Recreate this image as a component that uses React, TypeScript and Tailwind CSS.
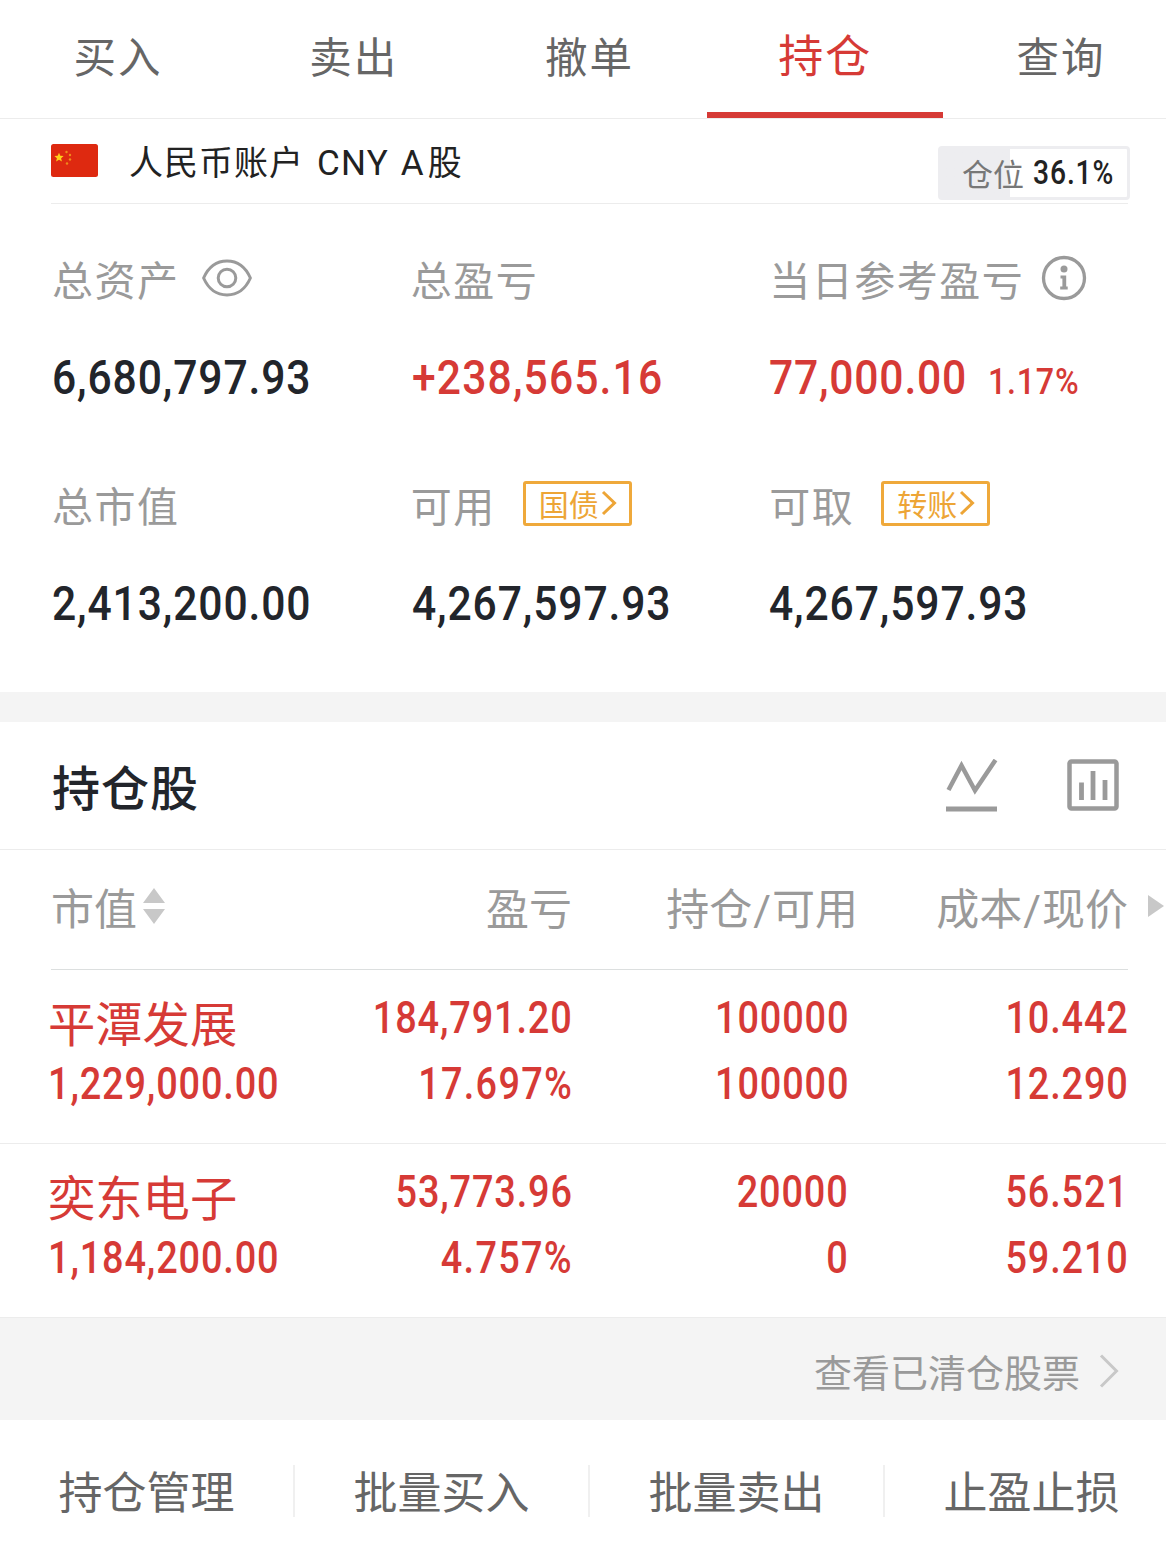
import type { ReactNode } from 'react';
import { clsx } from 'clsx';

const tabs = ['买入', '卖出', '撤单', '持仓', '查询'];

const holdings = [
  {
    name: '平潭发展',
    value: '1,229,000.00',
    profit: '184,791.20',
    rate: '17.697%',
    amount: '100000',
    usable: '100000',
    cost: '10.442',
    price: '12.290',
  },
  {
    name: '奕东电子',
    value: '1,184,200.00',
    profit: '53,773.96',
    rate: '4.757%',
    amount: '20000',
    usable: '0',
    cost: '56.521',
    price: '59.210',
  },
];

const actions = ['持仓管理', '批量买入', '批量卖出', '止盈止损'];

// Narrow digits, squeezed towards one side
function Num({ children, right, className }: { children: ReactNode; right?: boolean; className?: string }) {
  return (
    <span
      className={clsx(
        "inline-block whitespace-nowrap font-['Roboto',sans-serif] font-medium scale-x-[0.87]",
        right ? 'origin-right' : 'origin-left',
        className ?? 'tracking-[1px]'
      )}
    >
      {children}
    </span>
  );
}

function Slash() {
  return <span className="px-px font-['Roboto',sans-serif] leading-[0]">/</span>;
}

function Flag() {
  return (
    <svg className="mb-[2px] w-[47px] h-[33px]" viewBox="0 0 47 33">
      <rect width="47" height="33" rx="2.5" fill="#de2910" />
      <path d="M8 8.8l1.3 3 3.3.3-2.5 2.1.8 3.2L8 15.7l-2.900 1.700.8-3.200-2.500-2.100 3.300-.3z" fill="#ffcf1a" />
      <g fill="#f08a1c">
        <circle cx="15.5" cy="8" r="1.2" />
        <circle cx="19" cy="11" r="1.2" />
        <circle cx="19" cy="15.5" r="1.2" />
        <circle cx="16" cy="19.5" r="1.2" />
      </g>
    </svg>
  );
}

function EyeIcon() {
  return (
    <svg className="w-[50px] h-[38px]" viewBox="0 0 50 38" fill="none" stroke="#9a9a9a" strokeWidth="3">
      <path d="M1.6 19C6.5 8 15 2 25 2s18.500 6 23.400 17C43.500 30 35 36 25 36S6.500 30 1.600 19z" strokeLinejoin="round" />
      <circle cx="25" cy="19" r="8.800" />
    </svg>
  );
}

function InfoIcon() {
  return (
    <svg className="w-[46px] h-[46px]" viewBox="0 0 46 46" fill="none">
      <circle cx="23" cy="23" r="20.500" stroke="#9a9a9a" strokeWidth="3.300" />
      <circle cx="23" cy="14" r="3.500" fill="#9a9a9a" />
      <path d="M19.500 20.500h5.700v11h1.500v3h-7.500v-3h2.200v-8h-1.900z" fill="#9a9a9a" />
    </svg>
  );
}

function LineIcon() {
  return (
    <svg className="w-[54px] h-[54px]" viewBox="0 0 54 54" fill="none" stroke="#9a9a9a">
      <path d="M3.500 31L16.500 6.500l13.500 25L50.500 1" strokeWidth="4.500" />
      <path d="M1 50h51" strokeWidth="5" />
    </svg>
  );
}

function BarsIcon() {
  return (
    <svg className="w-[52px] h-[52px]" viewBox="0 0 52 52" fill="none" stroke="#9a9a9a">
      <rect x="2.500" y="2.500" width="47" height="47" rx="2" strokeWidth="4.500" />
      <path d="M14.500 23.500v17.500M26 12v29M38 21v20" strokeWidth="4.800" />
    </svg>
  );
}

function TagButton({ children }: { children: ReactNode }) {
  return (
    <button className="mb-[2px] ml-[27px] flex h-[45px] w-[109px] items-center rounded-[3px] border-[3px] border-[#efa93b] pl-[11px] text-[30px] leading-[40px] text-[#eda536]">
      <span className="w-[64px] whitespace-nowrap pb-px">{children}</span>
      <svg className="h-[26px] w-[16px]" viewBox="0 0 16 26" fill="none" stroke="#eda536" strokeWidth="3">
        <path d="M2 2l11.500 11L2 24" />
      </svg>
    </button>
  );
}

function Stat({ label, extra, children }: { label: string; extra?: ReactNode; children: ReactNode }) {
  return (
    <div className="whitespace-nowrap">
      <div className="flex h-[60px] items-center text-[41px] leading-[60px] text-[#9a9a9a]">
        <span className="tracking-[1.5px]">{label}</span>
        {extra}
      </div>
      <div className="mt-[40px] flex h-[60px] text-[49px] leading-[60px]">{children}</div>
    </div>
  );
}

export default function App() {
  return (
    <div className="h-[1549px] w-[1166px] overflow-hidden bg-white font-['Noto_Sans_CJK_SC',sans-serif] text-[#22252b]">
      {/* Tabs */}
      <nav className="flex h-[119px] border-b border-[#ececec]">
        {tabs.map((tab) => (
          <div
            key={tab}
            className={clsx(
              'flex h-[118px] w-[235.800px] shrink-0 justify-center border-b-[6px] tracking-[2px]',
              tab === '持仓'
                ? 'border-[#d63a36] text-[45px] leading-[107px] text-[#d63a36]'
                : 'border-transparent text-[42.500px] leading-[109px] text-[#666]'
            )}
          >
            {tab}
          </div>
        ))}
      </nav>

      {/* Account */}
      <div className="mr-[38px] ml-[51px] flex h-[85px] items-center border-b border-[#ececec]">
        <Flag />
        <div className="ml-[31px] whitespace-nowrap pt-[2px] text-[34px] leading-[60px] tracking-[1px] text-[#222]">
          人民币账户
          <span className="mr-[3px] ml-[13px] font-['Roboto',sans-serif] text-[35px] tracking-[1.200px] [word-spacing:2px]">
            CNY A
          </span>
          股
        </div>
        <div className="mt-[23px] -mr-[2px] ml-auto flex h-[54px] w-[192px] items-center rounded-[4px] border-[3px] border-[#ededf0] bg-linear-to-r from-[#ededf0] from-[37%] to-white to-[37%] pl-[21px]">
          <span className="text-[31px] leading-[48px] text-[#777]">仓位</span>
          <Num className="ml-[9px] pt-px text-[32.500px] leading-[48px] tracking-[1px] text-[#222]">36.1%</Num>
        </div>
      </div>

      {/* Assets */}
      <section className="grid h-[488px] grid-cols-3 content-start gap-y-[66px] pr-[38px] pl-[52px] pt-[44px]">
        <Stat label="总资产" extra={<span className="ml-[22px]"><EyeIcon /></span>}>
          <Num>6,680,797.93</Num>
        </Stat>
        <Stat label="总盈亏">
          <Num className="ml-px tracking-[1.300px] text-[#d63a36]">+238,565.16</Num>
        </Stat>
        <Stat label="当日参考盈亏" extra={<span className="ml-[17px]"><InfoIcon /></span>}>
          <Num className="tracking-[0.900px] text-[#d63a36]">
            77,000.00<span className="ml-[24px] text-[37px]">1.17%</span>
          </Num>
        </Stat>
        <Stat label="总市值">
          <Num>2,413,200.00</Num>
        </Stat>
        <Stat label="可用" extra={<TagButton>国债</TagButton>}>
          <Num className="ml-px tracking-[1px]">4,267,597.93</Num>
        </Stat>
        <Stat label="可取" extra={<TagButton>转账</TagButton>}>
          <Num>4,267,597.93</Num>
        </Stat>
      </section>

      <div className="h-[30px] bg-[#f4f4f4]" />

      {/* Holdings header */}
      <div className="flex h-[128px] items-center border-b border-[#ececec] pr-[47px] pl-[52px]">
        <h2 className="pb-px text-[48px] leading-[70px] font-medium tracking-[1px]">持仓股</h2>
        <div className="ml-auto flex gap-[68px]">
          <LineIcon />
          <BarsIcon />
        </div>
      </div>

      {/* Column titles */}
      <div className="flex h-[119px] items-center whitespace-nowrap pb-[7px] text-[43px] leading-[60px] text-[#9a9a9a]">
        <div className="flex w-[272px] items-center pl-[51px]">
          市值
          <svg className="ml-[6px] h-[36px] w-[22px]" viewBox="0 0 22 36" fill="#c8c8c8">
            <path d="M11 0l11 15H0zM11 36l11-15H0z" />
          </svg>
        </div>
        <div className="w-[300px] text-right">盈亏</div>
        <div className="w-[286px] text-right">持仓<Slash />可用</div>
        <div className="w-[270px] text-right">成本<Slash />现价</div>
        <svg className="ml-[20px] h-[22px] w-[16px]" viewBox="0 0 16 22" fill="#c8c8c8">
          <path d="M0 0l16 11L0 22z" />
        </svg>
      </div>
      <div className="mx-[51px] h-px w-[1077px] bg-[#dcdfdf]" />

      {/* Rows */}
      {holdings.map((h) => (
        <div
          key={h.name}
          className="flex h-[174px] whitespace-nowrap border-b border-[#ececec] pt-[16px] text-[43.500px] leading-[66px] text-[#d63a36]"
        >
          <div className="flex w-[272px] flex-col items-start pl-[48px]">
            <div className="h-[66px] pt-[3px] text-[47.300px]">{h.name}</div>
            <Num>{h.value}</Num>
          </div>
          <div className="flex w-[301px] flex-col items-end">
            <Num right>{h.profit}</Num>
            <Num right className="tracking-[1.500px]">{h.rate}</Num>
          </div>
          <div className="flex w-[276px] flex-col items-end">
            <Num right>{h.amount}</Num>
            <Num right>{h.usable}</Num>
          </div>
          <div className="flex w-[280px] flex-col items-end">
            <Num right>{h.cost}</Num>
            <Num right>{h.price}</Num>
          </div>
        </div>
      ))}

      {/* Cleared positions link */}
      <div className="flex h-[102px] items-center justify-end bg-[#f4f4f4] pt-[4px] pr-[47px] text-[38px] leading-[60px] text-[#9a9a9a]">
        查看已清仓股票
        <svg className="ml-[19px] h-[34px] w-[20px]" viewBox="0 0 20 34" fill="none" stroke="#c8c8c8" strokeWidth="3">
          <path d="M2 1.500L17.500 17 2 32.500" />
        </svg>
      </div>

      {/* Bottom actions */}
      <div className="flex h-[129px] items-center pt-[12px]">
        {actions.map((action) => (
          <div
            key={action}
            className="h-[52px] w-[295px] shrink-0 border-r-2 border-[#f0f0f0] text-center text-[44px] leading-[51px] text-[#666]"
          >
            {action}
          </div>
        ))}
      </div>
    </div>
  );
}
